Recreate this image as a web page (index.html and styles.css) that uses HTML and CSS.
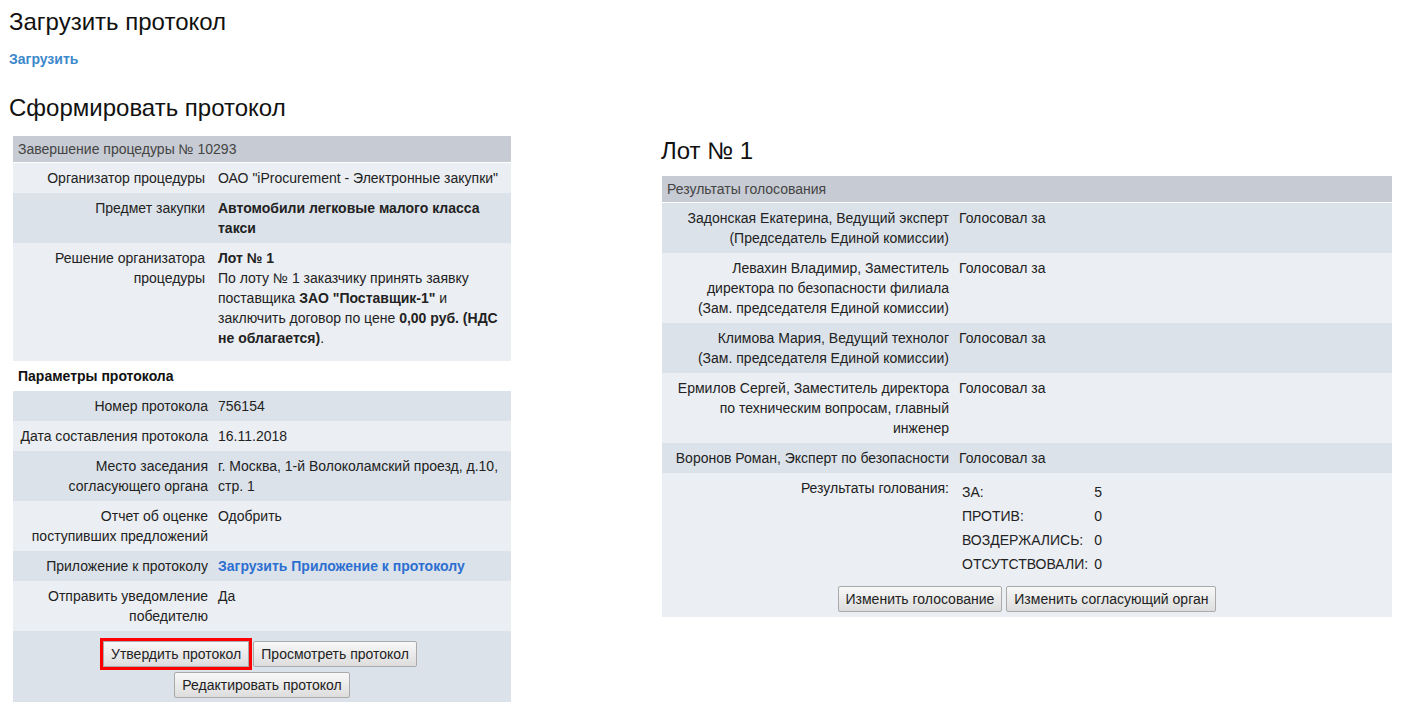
FILE: index.html
```html
<!DOCTYPE html>
<html lang="ru">
<head>
<meta charset="utf-8">
<title>Протокол</title>
<link rel="stylesheet" href="styles.css">
</head>
<body>
<div class="page">
  <h2 class="title">Загрузить протокол</h2>
  <a class="upload-link" href="#">Загрузить</a>
  <h2 class="title title-form">Сформировать протокол</h2>

  <div class="columns">
    <div class="col-left">
      <table class="info info-left">
        <colgroup><col class="c-lbl-left"><col class="c-val-left"></colgroup>
        <tr><th colspan="2">Завершение процедуры № 10293</th></tr>
        <tr class="light">
          <td class="lbl lbl-first">Организатор процедуры</td>
          <td>ОАО "iProcurement - Электронные закупки"</td>
        </tr>
        <tr class="dark">
          <td class="lbl lbl-first">Предмет закупки</td>
          <td><b>Автомобили легковые малого класса такси</b></td>
        </tr>
        <tr class="light">
          <td class="lbl lbl-first">Решение организатора процедуры</td>
          <td class="decision"><b>Лот № 1</b><br>По лоту № 1 заказчику принять заявку поставщика <b>ЗАО "Поставщик-1"</b> и заключить договор по цене <b>0,00 руб. (НДС не облагается)</b>.</td>
        </tr>
        <tr class="section">
          <td colspan="2">Параметры протокола</td>
        </tr>
        <tr class="dark">
          <td class="lbl">Номер протокола</td>
          <td>756154</td>
        </tr>
        <tr class="light">
          <td class="lbl">Дата составления протокола</td>
          <td>16.11.2018</td>
        </tr>
        <tr class="dark">
          <td class="lbl">Место заседания согласующего органа</td>
          <td>г. Москва, 1-й Волоколамский проезд, д.10, стр. 1</td>
        </tr>
        <tr class="light">
          <td class="lbl">Отчет об оценке поступивших предложений</td>
          <td>Одобрить</td>
        </tr>
        <tr class="dark">
          <td class="lbl">Приложение к протоколу</td>
          <td><a class="attach-link" href="#">Загрузить Приложение к протоколу</a></td>
        </tr>
        <tr class="light">
          <td class="lbl">Отправить уведомление победителю</td>
          <td>Да</td>
        </tr>
        <tr class="dark">
          <td colspan="2" class="buttons-left">
            <div class="btn-stack">
              <div class="btn-row btn-row-first">
                <button class="btn btn-focus" type="button">Утвердить протокол</button>
                <button class="btn" type="button">Просмотреть протокол</button>
              </div>
              <div class="btn-row">
                <button class="btn" type="button">Редактировать протокол</button>
              </div>
            </div>
          </td>
        </tr>
      </table>
    </div>

    <div class="col-right">
      <h2 class="lot-title">Лот № 1</h2>
      <table class="info info-right">
        <colgroup><col class="c-lbl-right"><col></colgroup>
        <tr><th colspan="2">Результаты голосования</th></tr>
        <tr class="dark">
          <td class="lbl">Задонская Екатерина, Ведущий эксперт<br>(Председатель Единой комиссии)</td>
          <td>Голосовал за</td>
        </tr>
        <tr class="light">
          <td class="lbl">Левахин Владимир, Заместитель директора по безопасности филиала<br>(Зам. председателя Единой комиссии)</td>
          <td>Голосовал за</td>
        </tr>
        <tr class="dark">
          <td class="lbl">Климова Мария, Ведущий технолог<br>(Зам. председателя Единой комиссии)</td>
          <td>Голосовал за</td>
        </tr>
        <tr class="light">
          <td class="lbl">Ермилов Сергей, Заместитель директора по техническим вопросам, главный инженер</td>
          <td>Голосовал за</td>
        </tr>
        <tr class="dark">
          <td class="lbl">Воронов Роман, Эксперт по безопасности</td>
          <td>Голосовал за</td>
        </tr>
        <tr class="light">
          <td class="lbl">Результаты голования:</td>
          <td>
            <div class="tally">
              <span>ЗА:</span><span>5</span>
              <span>ПРОТИВ:</span><span>0</span>
              <span>ВОЗДЕРЖАЛИСЬ:</span><span>0</span>
              <span>ОТСУТСТВОВАЛИ:</span><span>0</span>
            </div>
          </td>
        </tr>
        <tr class="light">
          <td colspan="2" class="buttons-right">
            <div class="btn-row">
              <button class="btn" type="button">Изменить голосование</button>
              <button class="btn" type="button">Изменить согласующий орган</button>
            </div>
          </td>
        </tr>
      </table>
    </div>
  </div>
</div>
</body>
</html>
```

FILE: styles.css
```css
body {
  margin: 0;
  background: #fff;
  font-family: "Liberation Sans", Arial, sans-serif;
  font-size: 14px;
  color: #222;
}

.page {
  padding: 8px 8px 8px 9px;
}

.title {
  margin: 1px 0 0 0;
  font-size: 24px;
  line-height: 26px;
  font-weight: normal;
  color: #111;
}

.upload-link {
  display: block;
  margin-top: 16px;
  font-size: 14px;
  line-height: 16px;
  font-weight: bold;
  color: #3b88cc;
  text-decoration: none;
}

.title-form {
  margin-top: 28px;
}

.columns {
  display: flex;
  margin-top: 15px;
  align-items: flex-start;
}

.col-left {
  width: 498px;
  padding-left: 4px;
  flex: none;
}

.col-right {
  width: 731px;
  margin-left: 150px;
  flex: none;
}

.lot-title {
  margin: 2px 0 12px 0;
  font-size: 24px;
  line-height: 26px;
  font-weight: normal;
  color: #111;
}

.info {
  border-collapse: collapse;
  table-layout: fixed;
}

.info-left {
  width: 498px;
}

.info-right {
  width: 730px;
  margin-left: 1px;
}

.c-lbl-left {
  width: 200px;
}

.c-lbl-right {
  width: 292px;
}

.info th {
  padding: 5px;
  line-height: 16px;
  text-align: left;
  font-weight: normal;
  color: #444;
  background: #c7cbd3;
  border-bottom: 1px solid #fff;
}

.info td {
  padding: 5px;
  line-height: 20px;
  vertical-align: top;
}

.info td.lbl {
  text-align: right;
}

.info td.lbl-first {
  padding-right: 8px;
}

.info td.decision {
  padding-bottom: 13px;
}

.info tr.dark td {
  background: #dce2ea;
}

.info tr.light td {
  background: #ebeef2;
}

.info tr.section td {
  background: #fff;
  font-weight: bold;
  color: #111;
}

.attach-link {
  font-weight: bold;
  color: #2c6fd1;
  text-decoration: none;
}

.tally {
  display: grid;
  grid-template-columns: auto auto;
  justify-content: start;
  column-gap: 6px;
  margin-top: 2px;
  padding-left: 3px;
  line-height: 24px;
}

.info td.buttons-left {
  padding: 10px 5px 4px;
}

.info td.buttons-right {
  padding: 5px;
}

.btn-stack {
  display: flex;
  flex-direction: column;
  align-items: center;
  gap: 5px;
}

.btn-row {
  display: flex;
  justify-content: center;
  gap: 4px;
}

.btn-row-first {
  padding-right: 4px;
}

.btn {
  height: 26px;
  padding: 0 7px;
  font-family: "Liberation Sans", Arial, sans-serif;
  font-size: 14px;
  color: #222;
  background: linear-gradient(#f8f8f8, #dddddd);
  border: 1px solid #aaa;
  border-radius: 2px;
}

.btn-focus {
  border-radius: 0;
  outline: 3px solid #f00;
}
```
